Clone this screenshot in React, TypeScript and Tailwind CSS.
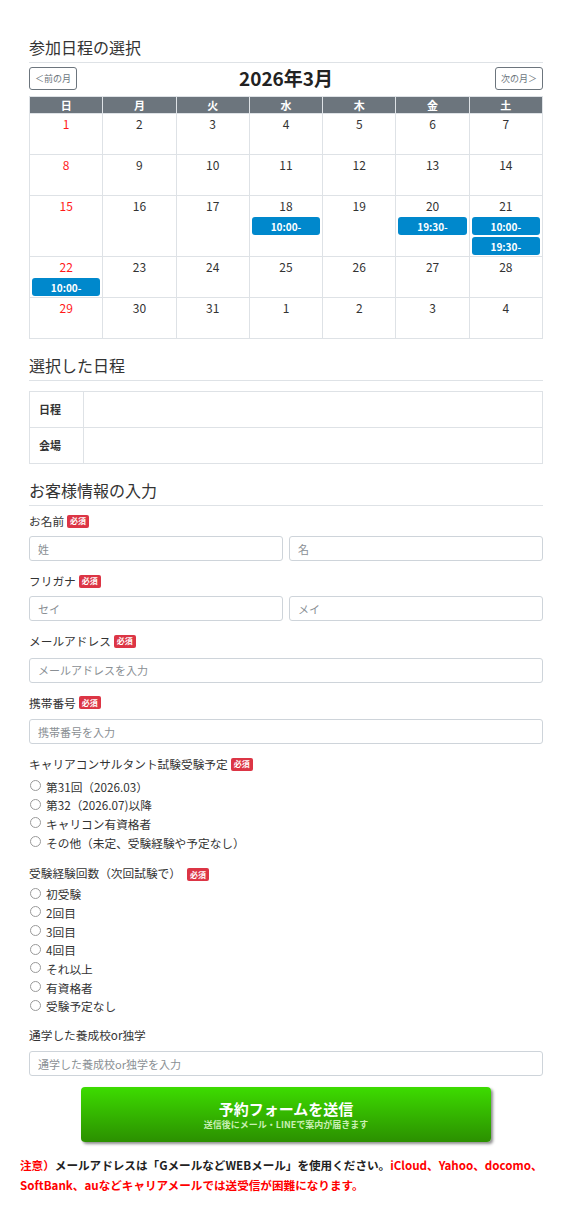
import React from 'react';

type Day = { n: number; red?: boolean; slots?: string[] };

const weeks: Day[][] = [
  [{ n: 1, red: true }, { n: 2 }, { n: 3 }, { n: 4 }, { n: 5 }, { n: 6 }, { n: 7 }],
  [{ n: 8, red: true }, { n: 9 }, { n: 10 }, { n: 11 }, { n: 12 }, { n: 13 }, { n: 14 }],
  [
    { n: 15, red: true },
    { n: 16 },
    { n: 17 },
    { n: 18, slots: ['10:00-'] },
    { n: 19 },
    { n: 20, slots: ['19:30-'] },
    { n: 21, slots: ['10:00-', '19:30-'] },
  ],
  [{ n: 22, red: true, slots: ['10:00-'] }, { n: 23 }, { n: 24 }, { n: 25 }, { n: 26 }, { n: 27 }, { n: 28 }],
  [{ n: 29, red: true }, { n: 30 }, { n: 31 }, { n: 1 }, { n: 2 }, { n: 3 }, { n: 4 }],
];

const rowHeights = ['h-[41px]', 'h-[41px]', 'h-[61px]', 'h-[41px]', 'h-[41px]'];

const weekdays = ['日', '月', '火', '水', '木', '金', '土'];

const Required = () => (
  <span className="ml-[3px] inline-flex h-[13px] items-center rounded-[2px] bg-[#dc3545] px-[3px] text-[8px] font-bold leading-none text-white">
    必須
  </span>
);

const SectionTitle = ({ children, className = '' }: { children: React.ReactNode; className?: string }) => (
  <h2 className={`border-b border-[#dee2e6] pb-[5px] text-[16px] leading-[20px] text-[#333] ${className}`}>{children}</h2>
);

const Field = ({ placeholder }: { placeholder: string }) => (
  <input
    placeholder={placeholder}
    className="h-[25px] w-full rounded-[3px] border border-[#ced4da] bg-white px-[8px] text-[11px] text-[#333] placeholder:text-[#8a8f94] outline-none"
  />
);

const Radio = ({ label }: { label: string }) => (
  <label className="flex h-[18.7px] items-center text-[11.7px] text-[#333]">
    <span className="mr-[5px] ml-[1px] -mt-[2px] inline-block h-[11px] w-[11px] rounded-full border border-[#9a9a9a] bg-white" />
    {label}
  </label>
);

const Label = ({ children }: { children: React.ReactNode }) => (
  <div className="flex h-[18px] items-center text-[11.7px] text-[#333]">{children}</div>
);

const App: React.FC = () => {
  return (
    <div className="min-h-[1228px] bg-white px-5 pb-8 font-['Noto_Sans_CJK_JP','Noto_Sans',sans-serif] text-[#333]">
      <div className="px-[9px] pt-[37px]">
        <SectionTitle>参加日程の選択</SectionTitle>

        <div className="mt-[4px] flex h-[23px] items-center justify-between">
          <button className="h-[23px] rounded-[3px] border border-[#6c757d] px-[5px] text-[9px] text-[#6c757d]">＜前の月</button>
          <div className="text-[19px] font-bold text-[#222]">2026年3月</div>
          <button className="h-[23px] rounded-[3px] border border-[#6c757d] px-[5px] text-[9px] text-[#6c757d]">次の月＞</button>
        </div>

        <table className="mt-[6px] w-full table-fixed border-collapse">
          <thead>
            <tr>
              {weekdays.map(w => (
                <th key={w} className="h-[17px] border border-[#dee2e6] bg-[#6c757d] p-0 text-[11px] font-bold leading-[15px] text-white">
                  {w}
                </th>
              ))}
            </tr>
          </thead>
          <tbody>
            {weeks.map((week, i) => (
              <tr key={i} className={rowHeights[i]}>
                {week.map((d, j) => (
                  <td key={j} className="border border-[#dee2e6] p-0 px-[2px] align-top text-center">
                    <div className={`pt-[1px] text-[12px] leading-[18px] ${d.red ? 'text-[#ff1a1a]' : 'text-[#333]'}`}>{d.n}</div>
                    {d.slots?.map(s => (
                      <div
                        key={s}
                        className="mt-[2px] flex h-[18px] items-center justify-center rounded-[3px] bg-[#0088cc] text-[10px] font-bold text-white"
                      >
                        {s}
                      </div>
                    ))}
                  </td>
                ))}
              </tr>
            ))}
          </tbody>
        </table>

        <SectionTitle className="mt-[16px]">選択した日程</SectionTitle>

        <table className="mt-[10px] w-full border-collapse">
          <tbody>
            <tr className="h-[36px]">
              <th className="w-[54px] border border-[#dee2e6] pl-[9px] text-left text-[11px] font-bold">日程</th>
              <td className="border border-[#dee2e6]"></td>
            </tr>
            <tr className="h-[36px]">
              <th className="w-[54px] border border-[#dee2e6] pl-[9px] text-left text-[11px] font-bold">会場</th>
              <td className="border border-[#dee2e6]"></td>
            </tr>
          </tbody>
        </table>

        <SectionTitle className="mt-[16px]">お客様情報の入力</SectionTitle>

        <div className="mt-[6px]">
          <Label>
            お名前<Required />
          </Label>
          <div className="mt-[6px] grid grid-cols-2 gap-[6px]">
            <Field placeholder="姓" />
            <Field placeholder="名" />
          </div>
        </div>

        <div className="mt-[11px]">
          <Label>
            フリガナ<Required />
          </Label>
          <div className="mt-[6px] grid grid-cols-2 gap-[6px]">
            <Field placeholder="セイ" />
            <Field placeholder="メイ" />
          </div>
        </div>

        <div className="mt-[11px]">
          <Label>
            メールアドレス<Required />
          </Label>
          <div className="mt-[6px]">
            <Field placeholder="メールアドレスを入力" />
          </div>
        </div>

        <div className="mt-[11px]">
          <Label>
            携帯番号<Required />
          </Label>
          <div className="mt-[6px]">
            <Field placeholder="携帯番号を入力" />
          </div>
        </div>

        <div className="mt-[11px]">
          <Label>
            キャリアコンサルタント試験受験予定<Required />
          </Label>
          <div className="mt-[4px]">
            <Radio label="第31回（2026.03）" />
            <Radio label="第32（2026.07)以降" />
            <Radio label="キャリコン有資格者" />
            <Radio label="その他（未定、受験経験や予定なし）" />
          </div>
        </div>

        <div className="mt-[12px]">
          <Label>
            受験経験回数（次回試験で）<span className="ml-[3px]"><Required /></span>
          </Label>
          <div className="mt-[3px]">
            <Radio label="初受験" />
            <Radio label="2回目" />
            <Radio label="3回目" />
            <Radio label="4回目" />
            <Radio label="それ以上" />
            <Radio label="有資格者" />
            <Radio label="受験予定なし" />
          </div>
        </div>

        <div className="mt-[10px]">
          <Label>通学した養成校or独学</Label>
          <div className="mt-[6px]">
            <Field placeholder="通学した養成校or独学を入力" />
          </div>
        </div>

        <div className="mt-[11px] flex justify-center">
          <button className="flex h-[55px] w-[410px] flex-col items-center justify-center rounded-[4px] bg-gradient-to-b from-[#3ddc00] to-[#2b9000] shadow-[2px_2px_3px_rgba(0,0,0,0.45)]">
            <span className="text-[15px] font-bold leading-[20px] text-white">予約フォームを送信</span>
            <span className="text-[9px] font-bold leading-[12px] text-[#c9efb4]">送信後にメール・LINEで案内が届きます</span>
          </button>
        </div>
      </div>

      <p className="mt-[13px] text-[11.6px] font-bold leading-[20px] text-[#222]">
        <span className="text-[#ff0000]">注意）</span>メールアドレスは「GメールなどWEBメール」を使用ください。
        <span className="text-[#ff0000]">iCloud、Yahoo、docomo、SoftBank、auなどキャリアメールでは送受信が困難になります。</span>
      </p>
    </div>
  );
};

export default App;
